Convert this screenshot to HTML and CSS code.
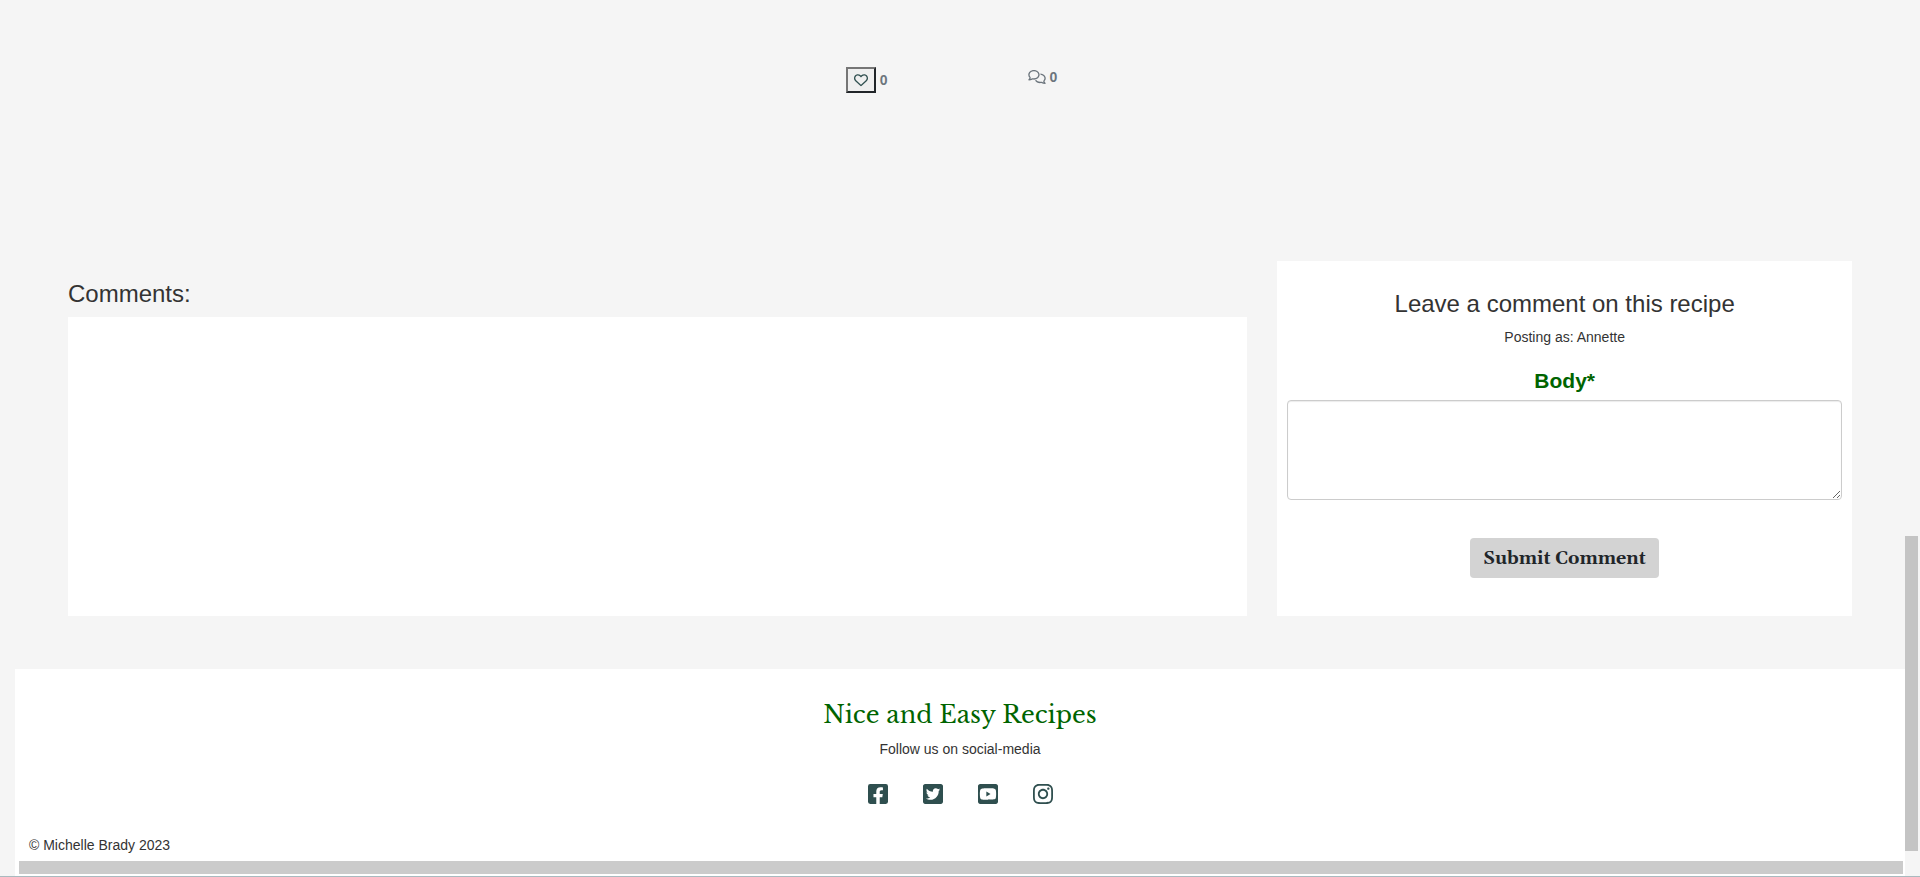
FILE: index.html
```html
<!DOCTYPE html>
<html lang="en">
<head>
<meta charset="utf-8">
<title>Nice and Easy Recipes</title>
<link rel="stylesheet" href="styles.css">
</head>
<body>
<div class="shell">
  <div class="page">
    <main class="recipe">
      <div class="reactions">
        <div class="reaction">
          <button class="like" type="button" aria-label="Like"><svg class="icon-small" viewBox="0 0 512 512" aria-hidden="true"><path d="M244 84L255.100 96L267 84.020C300.600 51.370 347 36.510 392.600 44.100C461.500 55.580 512 115.200 512 185.100V190.900C512 232.400 494.800 272.100 464.400 300.400L283.700 469.100C276.200 476.100 266.300 480 256 480C245.700 480 235.800 476.100 228.300 469.100L47.590 300.400C17.230 272.100 0 232.400 0 190.900V185.100C0 115.200 50.520 55.580 119.400 44.100C164.100 36.510 211.400 51.370 244 84zM255.100 163.900L210.100 117.100C188.400 96.280 157.600 86.400 127.300 91.440C81.550 99.070 48 138.700 48 185.100V190.900C48 219.100 59.710 246.100 80.340 265.300L256 429.300L431.700 265.300C452.300 246.100 464 219.100 464 190.900V185.100C464 138.700 430.400 99.070 384.700 91.440C354.400 86.400 323.600 96.280 301.900 117.100L255.100 163.900z"/></svg></button>
          <span class="count">0</span>
        </div>
        <div class="reaction">
          <svg class="icon-comments" viewBox="0 0 640 512" role="img" aria-label="Comments"><path d="M88.200 309.100c9.800-18.300 6.800-40.800-7.500-55.800C59.400 230.900 48 204 48 176c0-63.500 63.800-128 160-128s160 64.500 160 128s-63.800 128-160 128c-13.100 0-25.800-1.300-37.800-3.600c-10.400-2-21.200-.6-30.700 4.200c-4.100 2.100-8.300 4.100-12.600 6c-16 7.200-32.900 13.500-49.900 18c2.800-4.600 5.400-9.100 7.900-13.600c1.100-1.900 2.200-3.900 3.200-5.900zM0 176c0 41.800 17.200 80.100 45.900 110.300c-.9 1.700-1.900 3.500-2.800 5.100c-10.300 18.400-22.300 36.500-36.600 52.100c-6.600 7-8.300 17.200-4.600 25.900C5.800 378.300 14.400 384 24 384c43 0 86.500-13.300 122.700-29.700c4.800-2.200 9.600-4.500 14.200-6.800c15.100 3 30.900 4.500 47.100 4.500c114.900 0 208-78.800 208-176S322.900 0 208 0S0 78.800 0 176zM432 480c16.200 0 31.900-1.600 47.100-4.500c4.600 2.300 9.400 4.600 14.200 6.800C529.500 498.700 573 512 616 512c9.600 0 18.200-5.700 22-14.500c3.800-8.800 2-19-4.600-25.900c-14.200-15.600-26.200-33.700-36.600-52.100c-.9-1.700-1.900-3.400-2.800-5.100C622.800 384.100 640 345.800 640 304c0-94.400-87.900-171.500-198.200-175.800c4.100 15.200 6.200 31.200 6.200 47.800l0 .6c87.200 6.700 144 67.500 144 127.400c0 28-11.400 54.900-32.700 77.200c-14.300 15-17.300 37.600-7.500 55.800c1.100 2 2.200 4 3.200 5.900c2.500 4.500 5.200 9 7.900 13.600c-17-4.500-33.900-10.700-49.900-18c-4.300-1.900-8.500-3.900-12.600-6c-9.500-4.800-20.300-6.200-30.700-4.200c-12.100 2.400-24.700 3.600-37.800 3.600c-61.700 0-110-26.500-136.800-62.300c-16 5.400-32.800 9.400-50 11.800C279 439.800 350 480 432 480z"/></svg>
          <span class="count">0</span>
        </div>
      </div>
      <div class="columns">
        <section class="comments">
          <h2 class="heading">Comments:</h2>
          <div class="comment-list"></div>
        </section>
        <form class="comment-form">
          <h2 class="heading">Leave a comment on this recipe</h2>
          <p class="posting">Posting as: Annette</p>
          <label class="body-label" for="body">Body*</label>
          <textarea class="body-input" id="body" required></textarea>
          <button class="submit" type="button">Submit Comment</button>
        </form>
      </div>
    </main>
    <footer class="footer">
      <h2 class="brand">Nice and Easy Recipes</h2>
      <p class="follow">Follow us on social-media</p>
      <nav class="social" aria-label="Social media">
        <a class="social-link" href="#" aria-label="Facebook"><svg class="icon-social" viewBox="0 32 448 448"><path d="M400 32H48A48 48 0 0 0 0 80v352a48 48 0 0 0 48 48h137.250V327.690h-63V256h63v-54.640c0-62.150 37-96.480 93.670-96.480 27.140 0 55.520 4.840 55.520 4.840v61h-31.270c-30.810 0-40.420 19.120-40.420 38.730V256h68.780l-11 71.690h-57.780V480H400a48 48 0 0 0 48-48V80a48 48 0 0 0-48-48z"/></svg></a>
        <a class="social-link" href="#" aria-label="Twitter"><svg class="icon-social" viewBox="0 32 448 448"><path d="M400 32H48C21.500 32 0 53.500 0 80v352c0 26.500 21.500 48 48 48h352c26.500 0 48-21.500 48-48V80c0-26.500-21.500-48-48-48zm-48.900 158.800c.2 2.800.2 5.700.2 8.500 0 86.700-66 186.600-186.600 186.600-37.200 0-71.700-10.800-100.700-29.400 5.300.6 10.400.8 15.800.8 30.700 0 58.900-10.400 81.400-28-28.800-.6-53-19.500-61.300-45.500 10.100 1.500 19.200 1.500 29.600-1.200-30-6.100-52.500-32.500-52.500-64.400v-.8c8.700 4.900 18.900 7.900 29.600 8.300a65.447 65.447 0 0 1-29.200-54.600c0-12.200 3.200-23.400 8.900-33.100 32.300 39.800 80.800 65.800 135.200 68.600-9.300-44.500 24-80.600 64-80.600 18.900 0 35.900 7.900 47.900 20.700 14.800-2.800 29-8.300 41.600-15.800-4.900 15.200-15.200 28-28.800 36.100 13.200-1.400 26-5.100 37.800-10.200-8.900 13.100-20.100 24.700-32.900 34z"/></svg></a>
        <a class="social-link" href="#" aria-label="YouTube"><svg class="icon-social" viewBox="0 32 448 448"><path d="M186.800 202.100l95.200 54.100-95.200 54.100V202.100zM448 80v352c0 26.500-21.500 48-48 48H48c-26.500 0-48-21.500-48-48V80c0-26.500 21.500-48 48-48h352c26.500 0 48 21.500 48 48zm-42 176.300s0-59.600-7.600-88.200c-4.200-15.800-16.500-28.200-32.200-32.400C337.900 128 224 128 224 128s-113.900 0-142.200 7.700c-15.700 4.200-28 16.600-32.200 32.400-7.600 28.500-7.600 88.200-7.600 88.200s0 59.600 7.600 88.200c4.200 15.800 16.500 27.700 32.200 31.900C110.100 384 224 384 224 384s113.900 0 142.200-7.700c15.700-4.200 28-16.100 32.200-31.900 7.600-28.500 7.600-88.100 7.600-88.100z"/></svg></a>
        <a class="social-link" href="#" aria-label="Instagram"><svg class="icon-social" viewBox="0 32 448 448"><path d="M224.100 141c-63.600 0-114.900 51.300-114.900 114.900s51.300 114.900 114.900 114.900S339 319.500 339 255.900 287.700 141 224.100 141zm0 189.600c-41.100 0-74.700-33.500-74.700-74.700s33.500-74.700 74.700-74.700 74.700 33.500 74.700 74.700-33.600 74.700-74.700 74.700zm146.400-194.300c0 14.900-12 26.800-26.800 26.800-14.900 0-26.800-12-26.800-26.800s12-26.800 26.800-26.800 26.800 12 26.800 26.800zm76.100 27.200c-1.700-35.900-9.900-67.700-36.200-93.900-26.200-26.200-58-34.400-93.900-36.200-37-2.100-147.900-2.100-184.900 0-35.800 1.700-67.600 9.900-93.900 36.100s-34.400 58-36.200 93.900c-2.100 37-2.100 147.900 0 184.900 1.700 35.900 9.900 67.700 36.200 93.900s58 34.400 93.900 36.200c37 2.100 147.900 2.100 184.900 0 35.900-1.700 67.700-9.900 93.900-36.200 26.200-26.200 34.400-58 36.200-93.900 2.100-37 2.100-147.800 0-184.800zM398.800 388c-7.800 19.600-22.900 34.700-42.600 42.600-29.500 11.700-99.500 9-132.100 9s-102.700 2.600-132.100-9c-19.600-7.800-34.700-22.900-42.600-42.600-11.700-29.500-9-99.500-9-132.100s-2.600-102.700 9-132.100c7.800-19.600 22.900-34.700 42.600-42.600 29.500-11.700 99.500-9 132.100-9s102.700-2.600 132.100 9c19.600 7.800 34.700 22.900 42.600 42.600 11.700 29.500 9 99.500 9 132.100s2.700 102.700-9 132.100z"/></svg></a>
      </nav>
      <p class="copyright">© Michelle Brady 2023</p>
      <div class="scroll-x"></div>
    </footer>
  </div>
  <div class="track-y"><div class="scroll-y"></div></div>
</div>
</body>
</html>
```
FILE: styles.css
```css
* {
  box-sizing: border-box;
}

body {
  margin: 0;
  background: #f5f5f5;
  color: #333;
  font-family: "Liberation Sans", Arial, sans-serif;
  font-size: 14px;
  line-height: 20px;
}

h2,
p {
  margin: 0;
}

.shell {
  display: flex;
  min-height: 100vh;
  border-bottom: 1px solid #a9babf;
}

.page {
  flex: 1;
  display: flex;
  flex-direction: column;
  padding-left: 15px;
}

.recipe {
  padding: 67px 53px 53px;
}

.reactions {
  display: flex;
  justify-content: center;
  align-items: flex-start;
  gap: 140px;
  padding-right: 17px;
  margin-bottom: 168px;
}

.reaction {
  display: flex;
  align-items: center;
  gap: 4px;
  color: #6c757d;
}

.count {
  font-weight: 700;
}

.like {
  display: flex;
  align-items: center;
  justify-content: center;
  width: 30px;
  height: 26px;
  padding: 0;
  border: 2px solid;
  border-color: #767676 #212529 #212529 #767676;
  background: #efefef;
  color: #2f4f4f;
}

.icon-small {
  width: 14px;
  height: 14px;
  fill: currentColor;
}

.icon-comments {
  width: 18px;
  height: 14px;
  fill: currentColor;
}

.columns {
  display: grid;
  grid-template-columns: repeat(12, 1fr);
  gap: 30px;
}

.heading {
  font-size: 24px;
  font-weight: 400;
  line-height: 26px;
}

.comments {
  grid-column: span 8;
  display: flex;
  flex-direction: column;
  gap: 10px;
  padding-top: 20px;
}

.comment-list {
  flex: 1;
  background: #fff;
}

.comment-form {
  grid-column: span 4;
  display: flex;
  flex-direction: column;
  align-items: center;
  padding: 30px 10px 38px;
  background: #fff;
}

.posting {
  margin: 10px 0 20px;
}

.body-label {
  margin-bottom: 6px;
  color: #006400;
  font-size: 21px;
  font-weight: 700;
  line-height: 27px;
}

.body-input {
  width: 100%;
  height: 100px;
  margin-bottom: 38px;
  border: 1px solid #ccc;
  border-radius: 4px;
  box-shadow: inset 0 1px 1px rgba(0, 0, 0, 0.08);
  background: #fff;
  font: inherit;
  resize: vertical;
}

.submit {
  height: 40px;
  padding: 0 13px;
  border: 0;
  border-radius: 4px;
  background: #d3d3d3;
  color: #212529;
  font-family: Georgia, Gelasio, "Liberation Serif", serif;
  font-size: 18px;
  font-weight: 700;
}

.footer {
  flex: 1;
  display: flex;
  flex-direction: column;
  align-items: center;
  padding-top: 30px;
  background: #fff;
}

.brand {
  color: #006400;
  font-family: "Libre Baskerville", "Liberation Serif", serif;
  font-size: 24px;
  font-weight: 400;
  line-height: 32px;
}

.follow {
  margin: 8px 0 25px;
}

.social {
  display: flex;
  gap: 35px;
}

.social-link {
  display: flex;
  color: #2f4f4f;
}

.icon-social {
  width: 20px;
  height: 20px;
  fill: currentColor;
}

.copyright {
  align-self: flex-start;
  margin: 31px 0 6px;
  padding-left: 14px;
}

.scroll-x {
  align-self: stretch;
  height: 13px;
  margin: 0 2px 2px 4px;
  background: #cbcbcb;
}

.track-y {
  display: flex;
  flex-direction: column;
  justify-content: flex-end;
  width: 15px;
  padding: 0 2px 25px 0;
}

.scroll-y {
  height: 37%;
  background: #c4c4c4;
}
```
